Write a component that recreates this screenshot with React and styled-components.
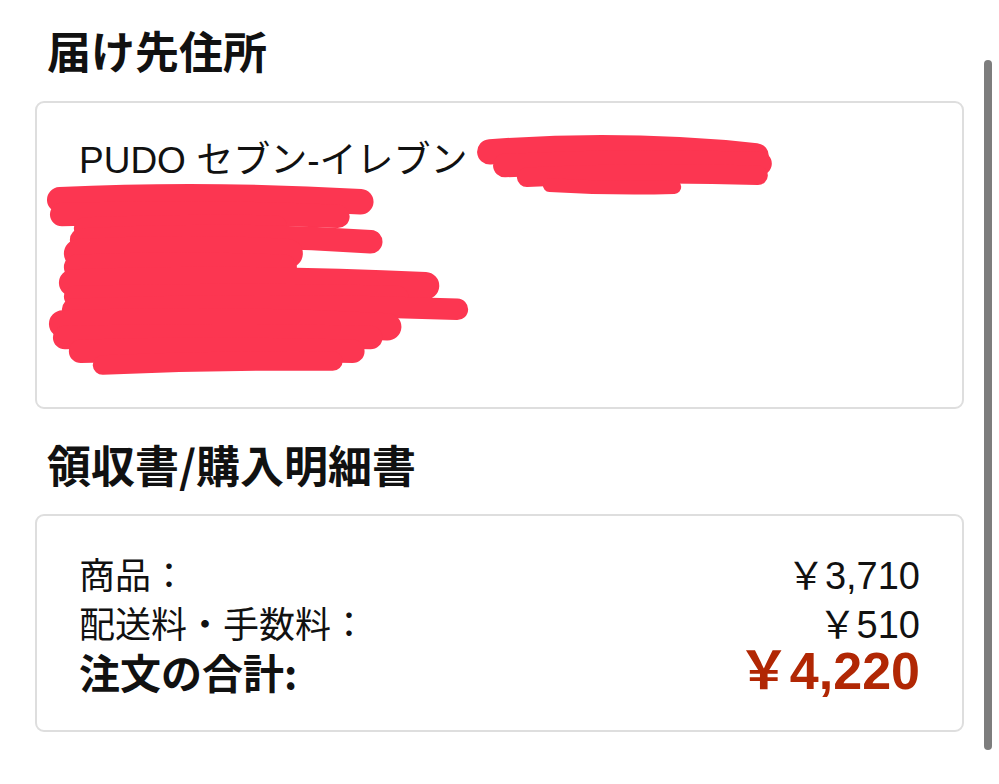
import React from "react";
import styled, { createGlobalStyle } from "styled-components";

const GlobalStyle = createGlobalStyle`
  html, body {
    margin: 0;
    padding: 0;
    background: #ffffff;
    font-family: "Noto Sans CJK JP", "Noto Sans", sans-serif;
    color: #111111;
  }
`;

const Page = styled.div`
  width: 999px;
  height: 784px;
  box-sizing: border-box;
  padding: 24px 35px 0;
  overflow: hidden;
  position: relative;
`;

const Heading = styled.h2`
  margin: ${(props) => (props.$first ? "0" : "29px")} 0 ${(props) => (props.$first ? "25px" : "24px")};
  padding-left: 12px;
  font-size: 44px;
  line-height: 52px;
  font-weight: 700;
  color: #111111;
`;

const Card = styled.div`
  position: relative;
  border: 2px solid #dedede;
  border-radius: 9px;
  padding: ${(props) => props.$pad};
`;

const NameLine = styled.div`
  font-family: "Liberation Sans", "Noto Sans CJK JP", sans-serif;
  font-size: 37px;
  line-height: 50px;
  color: #111111;
`;

const AddressLine = styled.div`
  font-size: 32px;
  line-height: 44px;
  color: #111111;
`;

const Scribble = styled.svg`
  position: absolute;
  left: 0;
  top: 0;
  width: 100%;
  height: 100%;
  pointer-events: none;
`;

const Row = styled.div`
  display: flex;
  justify-content: space-between;
  align-items: baseline;
  line-height: 46px;
`;

const Label = styled.span`
  font-size: ${(props) => (props.$total ? "41px" : "36px")};
  font-weight: ${(props) => (props.$total ? 700 : 400)};
  color: #111111;
`;

const Price = styled.span`
  font-family: "Liberation Sans", "Noto Sans CJK JP", sans-serif;
  font-size: ${(props) => (props.$total ? "52px" : "38px")};
  font-weight: ${(props) => (props.$total ? 700 : 400)};
  color: ${(props) => (props.$total ? "#b12704" : "#111111")};
`;

const ScrollThumb = styled.div`
  position: absolute;
  right: 7px;
  top: 60px;
  width: 8px;
  height: 690px;
  border-radius: 4px;
  background: #7d7d7d;
`;

const strokes = [
  ["M455 50 Q590 40 722 54", 26],
  ["M470 64 Q600 58 726 62", 24],
  ["M492 76 Q610 70 724 74", 20],
  ["M515 84 Q580 88 640 86", 14],
  ["M23 99 Q170 92 325 101", 26],
  ["M25 114 Q160 110 302 116", 24],
  ["M48 128 Q150 124 240 126", 22],
  ["M45 140 Q190 132 335 142", 24],
  ["M42 154 Q150 148 252 154", 30],
  ["M40 168 Q140 164 248 168", 26],
  ["M36 184 Q210 178 390 187", 28],
  ["M38 198 Q200 194 362 198", 22],
  ["M36 211 Q230 204 422 211", 22],
  ["M26 226 Q190 220 352 229", 28],
  ["M28 240 Q180 236 335 240", 24],
  ["M44 254 Q180 250 317 254", 24],
  ["M66 268 Q180 263 297 264", 20],
];

const Redaction = () => (
  <Scribble viewBox="0 0 929 311" preserveAspectRatio="none">
    {strokes.map(([d, w], i) => (
      <path
        key={i}
        d={d}
        fill="none"
        stroke="#fc3651"
        strokeWidth={w}
        strokeLinecap="round"
      />
    ))}
  </Scribble>
);

export default function App() {
  return (
    <>
      <GlobalStyle />
      <Page>
        <Heading $first>届け先住所</Heading>
        <Card $pad="33px 42px 45px">
          <NameLine>PUDO セブン-イレブン　店</NameLine>
          <AddressLine>〒</AddressLine>
          <AddressLine>住所</AddressLine>
          <AddressLine>日本</AddressLine>
          <AddressLine>電話</AddressLine>
          <Redaction />
        </Card>

        <Heading>領収書/購入明細書</Heading>
        <Card $pad="34px 42px 36px">
          <Row>
            <Label>商品：</Label>
            <Price>￥3,710</Price>
          </Row>
          <Row>
            <Label>配送料・手数料：</Label>
            <Price>￥510</Price>
          </Row>
          <Row>
            <Label $total>注文の合計:</Label>
            <Price $total>￥4,220</Price>
          </Row>
        </Card>
        <ScrollThumb />
      </Page>
    </>
  );
}
